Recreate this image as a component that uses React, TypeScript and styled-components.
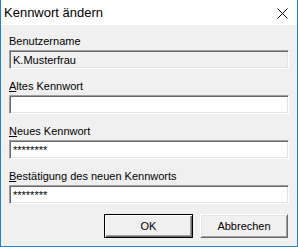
import { createGlobalStyle, styled } from 'styled-components';

const GlobalStyle = createGlobalStyle`
  html, body {
    margin: 0;
    padding: 0;
    background: #ffffff;
  }
  * {
    box-sizing: border-box;
  }
`;

const fields = [
  { label: 'Benutzername', mnemonic: '', value: 'K.Musterfrau', disabled: true },
  { label: 'Altes Kennwort', mnemonic: 'A', value: '', disabled: false },
  { label: 'Neues Kennwort', mnemonic: 'N', value: '********', disabled: false },
  { label: 'Bestätigung des neuen Kennworts', mnemonic: 'B', value: '********', disabled: false },
];

const App = () => {
  return (
    <>
      <GlobalStyle />
      <Window>
        <TitleBar>
          <Title>Kennwort ändern</Title>
          <CloseButton>
            <svg width="11" height="11" viewBox="0 0 11 11">
              <path d="M0.5 0.5 L10.5 10.5 M10.5 0.5 L0.5 10.5" stroke="#000" strokeWidth="1" />
            </svg>
          </CloseButton>
        </TitleBar>

        <Body>
          {fields.map(f => (
            <FieldGroup key={f.label}>
              <Label>
                {f.mnemonic ? (
                  <>
                    <u>{f.label.charAt(0)}</u>
                    {f.label.slice(1)}
                  </>
                ) : (
                  f.label
                )}
              </Label>
              <TextBox $disabled={f.disabled}>{f.value}</TextBox>
            </FieldGroup>
          ))}

          <ButtonRow>
            <DialogButton $default>OK</DialogButton>
            <DialogButton>Abbrechen</DialogButton>
          </ButtonRow>
        </Body>
      </Window>
    </>
  );
};
export default App;

const Window = styled.div`
  width: 298px;
  height: 247px;
  border: 1px solid #1883d7;
  border-top: none;
  background: #f0f0f0;
  display: flex;
  flex-direction: column;
  font-family: Tahoma, 'Liberation Sans', Arial, sans-serif;
  color: #000;
`;

const TitleBar = styled.div`
  height: 25px;
  background: #ffffff;
  display: flex;
  align-items: center;
  justify-content: space-between;
  padding-left: 3px;
  padding-right: 9px;
`;

const Title = styled.span`
  font-size: 13px;
  line-height: 15px;
  margin-top: -1px;
`;

const CloseButton = styled.span`
  display: flex;
  width: 11px;
  height: 11px;
  margin-top: 1px;
`;

const Body = styled.div`
  flex: 1;
  display: flex;
  flex-direction: column;
  padding: 10px 8px 0 8px;
  gap: 11px;
`;

const FieldGroup = styled.div`
  display: flex;
  flex-direction: column;
  gap: 2px;
`;

const Label = styled.div`
  font-size: 11px;
  line-height: 13px;

  u {
    text-underline-offset: 1px;
  }
`;

const TextBox = styled.div<{ $disabled?: boolean }>`
  height: 19px;
  width: 280px;
  background: ${p => (p.$disabled ? '#f0f0f0' : '#ffffff')};
  border-top: 1px solid #a0a0a0;
  border-left: 1px solid #a0a0a0;
  border-bottom: 1px solid #ffffff;
  border-right: 1px solid #ffffff;
  box-shadow: inset 1px 1px 0 #696969, inset -1px -1px 0 #e3e3e3;
  padding: 2px 3px 0 3px;
  font-size: 11px;
  line-height: 14px;
  white-space: nowrap;
`;

const ButtonRow = styled.div`
  display: flex;
  justify-content: flex-end;
  gap: 7px;
  margin-top: -1px;
  padding-right: 1px;
`;

const DialogButton = styled.div<{ $default?: boolean }>`
  width: ${p => (p.$default ? '89px' : '88px')};
  height: 24px;
  display: flex;
  align-items: center;
  justify-content: center;
  font-size: 11px;
  background: #f0f0f0;
  border: 1px solid;
  border-color: ${p => (p.$default ? '#000 #000 #000 #000' : '#fff #696969 #696969 #fff')};
  box-shadow: ${p =>
    p.$default
      ? 'inset 1px 1px 0 #fff, inset -1px -1px 0 #696969, inset -2px -2px 0 #a0a0a0'
      : 'inset 1px 1px 0 #e3e3e3, inset -1px -1px 0 #a0a0a0'};
`;
